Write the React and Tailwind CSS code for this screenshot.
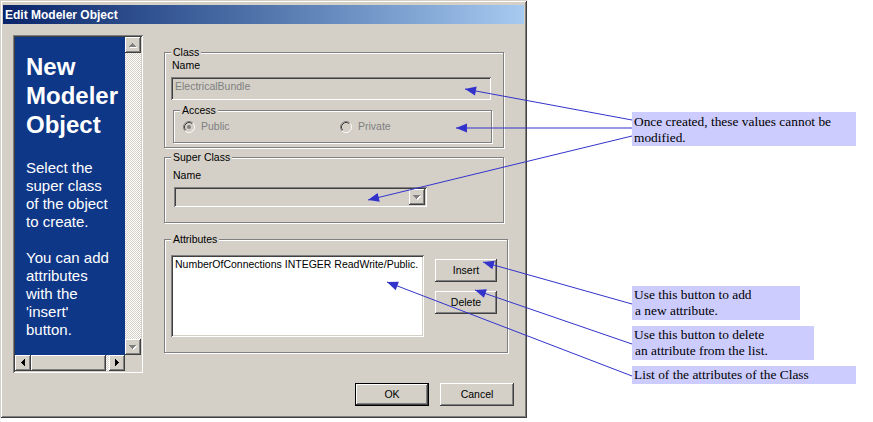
import React from "react";

const SUNKEN =
  "shadow-[inset_1px_1px_#808080,inset_-1px_-1px_#ffffff,inset_2px_2px_#404040,inset_-2px_-2px_#d4d0c8]";
const RAISED =
  "shadow-[inset_-1px_-1px_#404040,inset_1px_1px_#ffffff,inset_-2px_-2px_#808080,inset_2px_2px_#d4d0c8]";
const CHECKER =
  "bg-[repeating-conic-gradient(#ffffff_0%_25%,#d4d0c8_0%_50%)] bg-[length:2px_2px]";

const ARROW_PATHS = {
  up: "M3 0h1v1H3zM2 1h3v1H2zM1 2h5v1H1zM0 3h7v1H0z",
  down: "M0 0h7v1H0zM1 1h5v1H1zM2 2h3v1H2zM3 3h1v1H3z",
  left: "M3 0h1v7H3zM2 1h1v5H2zM1 2h1v3H1zM0 3h1v1H0z",
  right: "M0 0h1v7H0zM1 1h1v5H1zM2 2h1v3H2zM3 3h1v1H3z",
};

function Arrow({ dir, disabled }) {
  const horiz = dir === "up" || dir === "down";
  const w = horiz ? 7 : 4;
  const h = horiz ? 4 : 7;
  return (
    <svg width={w + 1} height={h + 1} viewBox={`0 0 ${w + 1} ${h + 1}`}>
      {disabled && (
        <path d={ARROW_PATHS[dir]} fill="#ffffff" transform="translate(1 1)" />
      )}
      <path d={ARROW_PATHS[dir]} fill={disabled ? "#808080" : "#000000"} />
    </svg>
  );
}

function ScrollBtn({ dir, disabled, className = "" }) {
  return (
    <div
      className={`w-[16px] h-[16px] bg-[#d4d0c8] flex items-center justify-center ${RAISED} ${className}`}
    >
      <Arrow dir={dir} disabled={disabled} />
    </div>
  );
}

function Radio({ checked }) {
  return (
    <svg width="12" height="12" viewBox="0 0 12 12" className="shrink-0">
      <circle cx="6" cy="6" r="5" fill="#d4d0c8" />
      <path d="M2.11 9.89A5.5 5.5 0 0 1 9.89 2.11" fill="none" stroke="#808080" />
      <path d="M9.89 2.11A5.5 5.5 0 0 1 2.11 9.89" fill="none" stroke="#ffffff" />
      <path d="M2.82 9.18A4.5 4.5 0 0 1 9.18 2.82" fill="none" stroke="#404040" />
      <path d="M9.18 2.82A4.5 4.5 0 0 1 2.82 9.18" fill="none" stroke="#d4d0c8" />
      {checked && <circle cx="6" cy="6" r="2" fill="#808080" />}
    </svg>
  );
}

function Button({ children, isDefault, className = "" }) {
  if (isDefault) {
    return (
      <div className={`border border-black ${className}`}>
        <div
          className={`w-full h-full flex items-center justify-center ${RAISED}`}
        >
          {children}
        </div>
      </div>
    );
  }
  return (
    <div className={`flex items-center justify-center ${RAISED} ${className}`}>
      {children}
    </div>
  );
}

const GROUP =
  "border border-[#808080] shadow-[1px_1px_0_#ffffff,inset_1px_1px_0_#ffffff] px-[6px]";
const LEGEND = "px-[2px] leading-[13px] bg-[#d4d0c8]";

function arrowHead(x1, y1, x2, y2, L = 11, W = 4.5) {
  const dx = x2 - x1;
  const dy = y2 - y1;
  const len = Math.sqrt(dx * dx + dy * dy);
  const ux = dx / len;
  const uy = dy / len;
  const bx = x2 - ux * L;
  const by = y2 - uy * L;
  const px = -uy * W;
  const py = ux * W;
  return `${x2},${y2} ${bx + px},${by + py} ${bx - px},${by - py}`;
}

const LINES = [
  [632, 120, 465, 89],
  [632, 128, 456, 128],
  [632, 136, 368, 200],
  [632, 304, 483, 262],
  [632, 344, 475, 290],
  [632, 376, 387, 282],
];

export default function App() {
  return (
    <div className="relative w-[873px] h-[422px] bg-white flex overflow-hidden font-['Liberation_Sans',Arial,sans-serif] text-[10.5px] text-black">
      {/* Dialog */}
      <div className="w-[527px] h-[418px] shrink-0 bg-[#d4d0c8] px-[3px] pt-[5px] flex flex-col shadow-[inset_1px_1px_#d4d0c8,inset_-1px_-1px_#404040,inset_2px_2px_#ffffff,inset_-2px_-2px_#808080]">
        {/* Title bar */}
        <div className="h-[19px] bg-linear-to-r from-[#0a246a] to-[#a6caf0] flex items-center pl-[2px]">
          <span className="text-white font-bold text-[12px] leading-[19px] pt-[1px]">
            Edit Modeler Object
          </span>
        </div>

        {/* Body */}
        <div className="flex flex-col pl-[10px] pt-[11px]">
          <div className="flex items-start">
            {/* Left info panel */}
            <div className={`w-[130px] h-[338px] p-[2px] flex flex-col ${SUNKEN}`}>
              <div className="flex h-[318px]">
                <div className="w-[110px] h-full bg-[#0f3788] text-white pl-[11px] pt-[15px]">
                  <div className="text-[24px] font-bold leading-[29px]">
                    New
                    <br />
                    Modeler
                    <br />
                    Object
                  </div>
                  <div className="mt-[20px] text-[15px] leading-[18px]">
                    Select the
                    <br />
                    super class
                    <br />
                    of the object
                    <br />
                    to create.
                  </div>
                  <div className="mt-[18px] text-[15px] leading-[18px]">
                    You can add
                    <br />
                    attributes
                    <br />
                    with the
                    <br />
                    'insert'
                    <br />
                    button.
                  </div>
                </div>
                <div className="w-[16px] h-full flex flex-col">
                  <ScrollBtn dir="up" disabled />
                  <div className={`flex-1 ${CHECKER}`} />
                  <ScrollBtn dir="down" disabled />
                </div>
              </div>
              <div className="flex h-[16px]">
                <ScrollBtn dir="left" />
                <div className={`w-[75px] h-[16px] bg-[#d4d0c8] ${RAISED}`} />
                <div className={`w-[3px] h-[16px] ${CHECKER}`} />
                <ScrollBtn dir="right" />
                <div className="w-[16px] h-[16px] bg-[#d4d0c8]" />
              </div>
            </div>

            {/* Right column */}
            <div className="ml-[21px] pt-[11px] w-[344px] flex flex-col">
              {/* Class */}
              <fieldset className={`w-[340px] pb-[4px] ${GROUP}`}>
                <legend className={LEGEND}>Class</legend>
                <div className="leading-[13px] pl-[1px]">Name</div>
                <div
                  className={`mt-[5px] w-[320px] h-[23px] pl-[4px] pt-[3px] leading-[13px] text-[#808080] ${SUNKEN}`}
                >
                  ElectricalBundle
                </div>
                <fieldset className={`mt-[4px] ml-[2px] w-[319px] pt-[3px] pb-[9px] ${GROUP}`}>
                  <legend className={LEGEND}>Access</legend>
                  <div className="flex items-center h-[13px] text-[#808080]">
                    <div className="w-[157px] flex items-center ml-[3px] gap-[6px]">
                      <Radio checked />
                      <span className="leading-[13px]">Public</span>
                    </div>
                    <div className="flex items-center gap-[6px]">
                      <Radio />
                      <span className="leading-[13px]">Private</span>
                    </div>
                  </div>
                </fieldset>
              </fieldset>

              {/* Super Class */}
              <fieldset className={`mt-[3px] w-[340px] pb-[15px] ${GROUP}`}>
                <legend className={LEGEND}>Super Class</legend>
                <div className="mt-[5px] leading-[13px] pl-[2px]">Name</div>
                <div
                  className={`mt-[5px] ml-[3px] w-[253px] h-[20px] p-[2px] flex justify-end ${SUNKEN}`}
                >
                  <ScrollBtn dir="down" disabled />
                </div>
              </fieldset>

              {/* Attributes */}
              <fieldset className={`mt-[10px] w-[344px] pb-[15px] ${GROUP}`}>
                <legend className={LEGEND}>Attributes</legend>
                <div className="flex items-start">
                  <div
                    className={`mt-[9px] w-[253px] h-[82px] bg-white pl-[4px] pt-[3px] leading-[13px] whitespace-nowrap overflow-hidden ${SUNKEN}`}
                  >
                    NumberOfConnections INTEGER ReadWrite/Public.
                  </div>
                  <div className="ml-[11px] mt-[13px] flex flex-col gap-[9px]">
                    <Button className="w-[62px] h-[23px]">Insert</Button>
                    <Button className="w-[62px] h-[23px]">Delete</Button>
                  </div>
                </div>
              </fieldset>
            </div>
          </div>

          {/* OK / Cancel */}
          <div className="mt-[10px] flex justify-end pr-[10px] gap-[11px]">
            <Button isDefault className="w-[74px] h-[23px]">
              OK
            </Button>
            <Button className="w-[74px] h-[23px]">Cancel</Button>
          </div>
        </div>
      </div>

      {/* Annotations */}
      <div className="ml-[105px] flex flex-col font-['Liberation_Serif','Times_New_Roman',serif] text-[13.4px] leading-[16px] text-black">
        <div className="mt-[112px] w-[224px] h-[34px] bg-[#ccccff] pl-[2px] pt-[2px] whitespace-nowrap">
          Once created, these values cannot be
          <br />
          modified.
        </div>
        <div className="mt-[140px] w-[168px] h-[34px] bg-[#ccccff] pl-[2px] pt-[1px] whitespace-nowrap">
          Use this button to add
          <br />
          <span className="pl-[1px]">a new attribute.</span>
        </div>
        <div className="mt-[6px] w-[182px] h-[34px] bg-[#ccccff] pl-[2px] pt-[1px] whitespace-nowrap">
          Use this button to delete
          <br />
          <span className="pl-[1px]">an attribute from the list.</span>
        </div>
        <div className="mt-[6px] w-[224px] h-[18px] bg-[#ccccff] pl-[2px] pt-[1px] whitespace-nowrap">
          List of the attributes of the Class
        </div>
      </div>

      {/* Callout arrows */}
      <svg
        className="absolute inset-0 pointer-events-none"
        width="873"
        height="422"
        viewBox="0 0 873 422"
      >
        {LINES.map(([x1, y1, x2, y2], i) => (
          <g key={i}>
            <line x1={x1} y1={y1} x2={x2} y2={y2} stroke="#3333cc" strokeWidth="1" />
            <polygon points={arrowHead(x1, y1, x2, y2)} fill="#3333cc" />
          </g>
        ))}
      </svg>
    </div>
  );
}
